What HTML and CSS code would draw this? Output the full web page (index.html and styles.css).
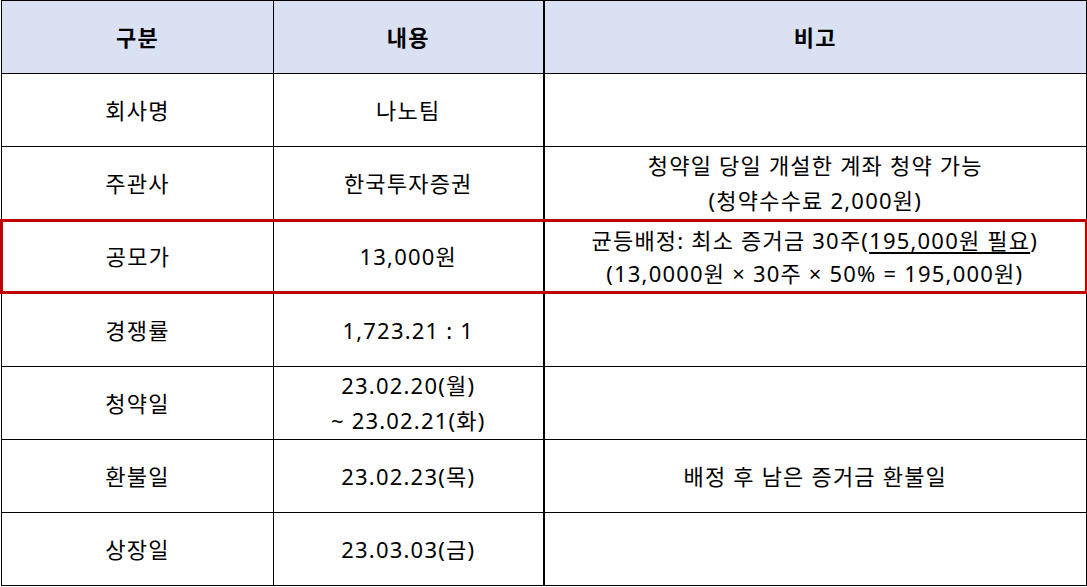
FILE: index.html
```html
<!DOCTYPE html>
<html lang="ko">
<head>
<meta charset="utf-8">
<link rel="stylesheet" href="styles.css">
</head>
<body>
<table class="info">
  <colgroup>
    <col class="c1"><col class="c2"><col class="c3">
  </colgroup>
  <tr class="head">
    <th>구분</th><th class="mid">내용</th><th>비고</th>
  </tr>
  <tr>
    <td>회사명</td><td class="mid">나노팀</td><td></td>
  </tr>
  <tr>
    <td>주관사</td><td class="mid">한국투자증권</td><td>청약일 당일 개설한 계좌 청약 가능<br>(청약수수료 2,000원)</td>
  </tr>
  <tr class="hl">
    <td class="first">공모가</td><td class="mid">13,000원</td><td class="last">균등배정: 최소 증거금 30주(<span class="ul">195,000원 필요</span>)<br>(13,0000원 × 30주 × 50% = 195,000원)</td>
  </tr>
  <tr>
    <td>경쟁률</td><td class="mid">1,723.21 : 1</td><td></td>
  </tr>
  <tr>
    <td>청약일</td><td class="mid">23.02.20(월)<br>~ 23.02.21(화)</td><td></td>
  </tr>
  <tr>
    <td>환불일</td><td class="mid">23.02.23(목)</td><td>배정 후 남은 증거금 환불일</td>
  </tr>
  <tr>
    <td>상장일</td><td class="mid">23.03.03(금)</td><td></td>
  </tr>
</table>
</body>
</html>
```

FILE: styles.css
```css
html, body {
  margin: 0;
  padding: 0;
  background: #ffffff;
}

.info {
  border-collapse: collapse;
  width: 1085px;
  table-layout: fixed;
  font-family: "Noto Sans", "Noto Sans CJK KR", sans-serif;
  font-size: 22px;
  letter-spacing: 1.2px;
  color: #000000;
}

.c1 { width: 272px; }
.c2 { width: 270px; }
.c3 { width: 543px; }

.info th,
.info td {
  border: 1px solid #000000;
  height: 72px;
  padding: 0;
  text-align: center;
  vertical-align: middle;
  line-height: 35px;
  font-weight: 400;
}

.info .mid {
  border-right: 2px solid #000000;
}

.head th {
  background: #d9e1f2;
  font-weight: 700;
}

.hl td {
  height: 69px;
  line-height: 33px;
  border-top: 3px solid #c00000;
  border-bottom: 3px solid #c00000;
}

.hl td.first {
  border-left: 3px solid #c00000;
}

.hl td.last {
  border-right: 3px solid #c00000;
}

.ul {
  text-decoration: underline;
  text-underline-offset: 3px;
}
```
